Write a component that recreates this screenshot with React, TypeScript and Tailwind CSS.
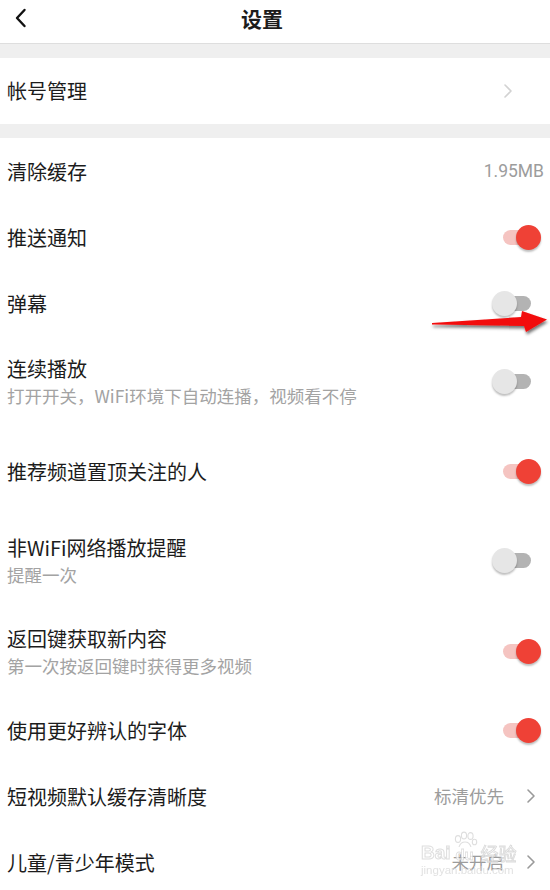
import React from "react";

const FONT = { fontFamily: '"Noto Sans CJK SC", "Noto Sans", sans-serif' };
const LATIN = { fontFamily: '"Liberation Sans", sans-serif' };

type Row =
  | { kind: "toggle"; title: string; sub?: string; on: boolean; h: string }
  | { kind: "value"; title: string; value: string; chevron?: boolean; h: string };

const rows: Row[] = [
  { kind: "value", title: "清除缓存", value: "1.95MB", h: "h-[66px]" },
  { kind: "toggle", title: "推送通知", on: true, h: "h-[66px]" },
  { kind: "toggle", title: "弹幕", on: false, h: "h-[66px]" },
  { kind: "toggle", title: "连续播放", sub: "打开开关，WiFi环境下自动连播，视频看不停", on: false, h: "h-[91px]" },
  { kind: "toggle", title: "推荐频道置顶关注的人", on: true, h: "h-[88px]" },
  { kind: "toggle", title: "非WiFi网络播放提醒", sub: "提醒一次", on: false, h: "h-[91px]" },
  { kind: "toggle", title: "返回键获取新内容", sub: "第一次按返回键时获得更多视频", on: true, h: "h-[91px]" },
  { kind: "toggle", title: "使用更好辨认的字体", on: true, h: "h-[66px]" },
  { kind: "value", title: "短视频默认缓存清晰度", value: "标清优先", chevron: true, h: "h-[66px]" },
  { kind: "value", title: "儿童/青少年模式", value: "未开启", chevron: true, h: "h-[66px]" },
];

function Toggle({ on }: { on: boolean }) {
  return (
    <div className="relative w-[49px] h-[25px] shrink-0">
      <div className={`absolute left-[11px] right-[10px] top-[5px] h-[15px] rounded-full ${on ? "bg-[#f5c4c1]" : "bg-[#b3b3b3]"}`} />
      <div
        className={`absolute top-0 w-[25px] h-[25px] rounded-full shadow-[0_2px_2px_rgba(0,0,0,0.25)] ${on ? "right-0 bg-[#ef4136]" : "left-0 bg-[#e6e6e6]"}`}
      />
    </div>
  );
}

function Chevron({ color = "#9a9a9a" }: { color?: string }) {
  return (
    <svg width="10" height="16" viewBox="0 0 10 16" fill="none">
      <path d="M2 2l6 6-6 6" stroke={color} strokeWidth="1.6" strokeLinecap="round" strokeLinejoin="round" />
    </svg>
  );
}

// faint baidu jingyan stamp over the bottom-right corner
function Watermark() {
  return (
    <div className="absolute left-[421px] top-[831px] flex flex-col whitespace-nowrap opacity-80 pointer-events-none select-none">
      <div className="flex items-end leading-none">
        <span className="text-[19px] font-bold text-white [-webkit-text-stroke:1px_#d6d6d6]" style={LATIN}>
          Bai
        </span>
        <div className="flex flex-col items-center w-[28px]">
          <svg width="26" height="16" viewBox="0 0 26 16">
            <g fill="none" stroke="#d6d6d6" strokeWidth="1.1">
              <ellipse cx="6" cy="8" rx="2.6" ry="3.4" />
              <ellipse cx="12" cy="4.5" rx="2.6" ry="3.4" />
              <ellipse cx="18.5" cy="5" rx="2.6" ry="3.4" />
              <ellipse cx="22.5" cy="11" rx="2.2" ry="2.8" />
              <path d="M7 16c1-3 3-5 6-5s5 2 6 5" />
            </g>
          </svg>
          <span className="text-[15px] font-bold text-white [-webkit-text-stroke:0.8px_#d6d6d6]" style={LATIN}>du</span>
        </div>
        <span className="ml-[2px] text-[18px] text-white [-webkit-text-stroke:0.9px_#d2d2d2]" style={FONT}>经验</span>
      </div>
      <span className="text-[11.5px] leading-none mt-[3px] text-[#dadada]" style={LATIN}>
        jingyan.baidu.com
      </span>
    </div>
  );
}

function Arrow() {
  return (
    <svg className="absolute left-[428px] top-[306px] pointer-events-none" width="122" height="34" viewBox="428 306 122 34">
      <defs>
        <filter id="sh" x="-20%" y="-50%" width="140%" height="200%">
          <feDropShadow dx="1" dy="2.5" stdDeviation="1.5" floodColor="#000" floodOpacity="0.55" />
        </filter>
      </defs>
      <polygon
        points="432,323 521,317 522,311 547,319.5 526,332 524,326 432,324.5"
        fill="#f20d0d"
        filter="url(#sh)"
      />
    </svg>
  );
}

export default function App() {
  return (
    <div className="relative w-[550px] h-[890px] overflow-hidden bg-white text-[#1c1c1c]" style={FONT}>
      <div className="flex items-center h-[44px] border-b border-[#dedede]">
        <div className="w-[40px] h-full flex items-center pl-[14px] pb-[7px]">
          <svg width="13" height="20" viewBox="0 0 13 20" fill="none">
            <path d="M10.5 2L3 10l7.5 8" stroke="#111" strokeWidth="2.4" strokeLinecap="round" strokeLinejoin="round" />
          </svg>
        </div>
        <div className="flex-1 text-center text-[21px] font-bold leading-none pb-[7px]">设置</div>
        <div className="w-[66px]" />
      </div>
      <div className="h-[14px] bg-[#efefef]" />
      <div className="flex items-center justify-between h-[66px] pl-[7px] pr-[37px]">
        <span className="text-[20px]">帐号管理</span>
        <Chevron color="#d2d2d2" />
      </div>
      <div className="h-[14px] bg-[#efefef]" />
      {rows.map((r) => (
        <div key={r.title} className={`flex items-center justify-between pl-[7px] ${r.h} ${r.kind === "toggle" ? "pr-[9px]" : r.chevron ? "pr-[14px]" : "pr-[6px]"}`}>
          <div className="flex flex-col">
            <span className="text-[20px] leading-[27px]">{r.title}</span>
            {r.kind === "toggle" && r.sub && <span className="text-[17.5px] leading-[27px] text-[#a3a3a3]">{r.sub}</span>}
          </div>
          {r.kind === "toggle" ? (
            <Toggle on={r.on} />
          ) : (
            <div className="flex items-center gap-[22px]">
              <span className="text-[17.5px] text-[#9c9c9c]" style={r.chevron ? FONT : { fontFamily: "Roboto, sans-serif" }}>{r.value}</span>
              {r.chevron && <Chevron />}
            </div>
          )}
        </div>
      ))}
      <Arrow />
      <Watermark />
    </div>
  );
}
